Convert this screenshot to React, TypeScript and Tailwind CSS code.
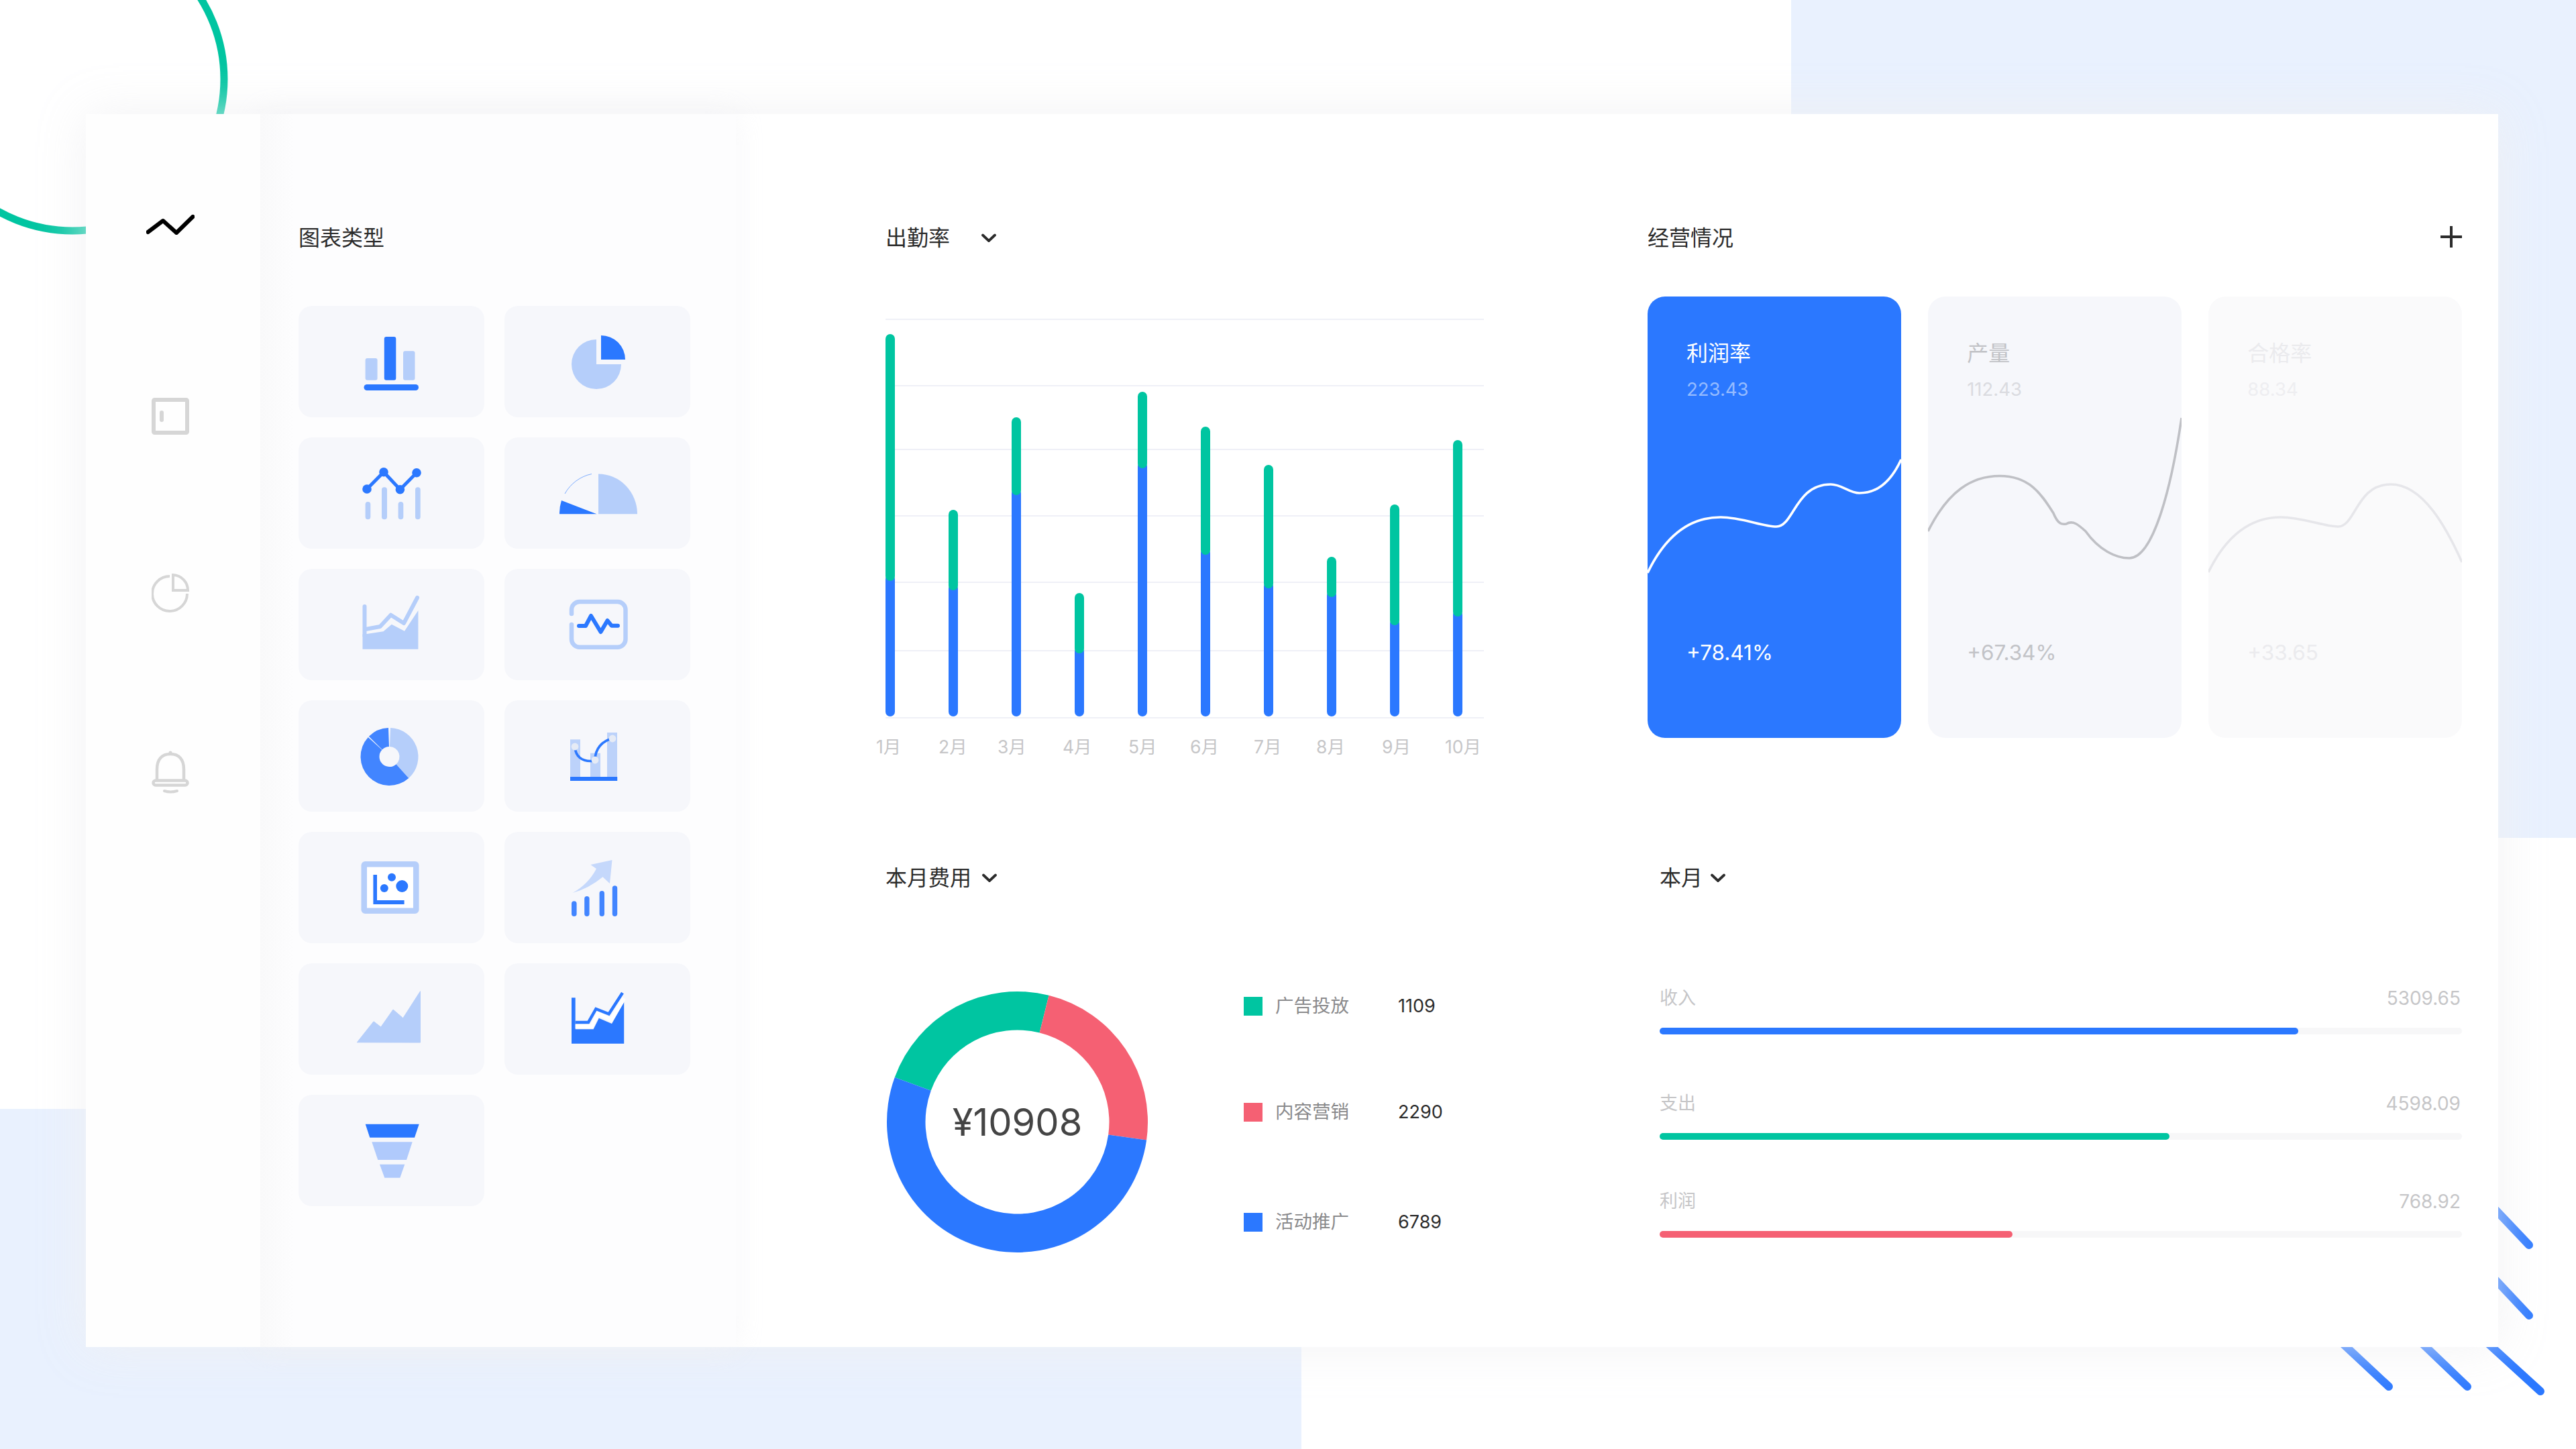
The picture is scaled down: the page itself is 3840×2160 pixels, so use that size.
import React from "react";

const BLUE = "#2b78ff";
const LIGHT = "#b5cefa";
const GREEN = "#00c5a1";
const RED = "#f56073";

function sector(cx: number, cy: number, r1: number, r2: number, a0: number, a1: number) {
  const p = (r: number, a: number) => {
    const t = ((a - 90) * Math.PI) / 180;
    return `${(cx + r * Math.cos(t)).toFixed(2)} ${(cy + r * Math.sin(t)).toFixed(2)}`;
  };
  const big = a1 - a0 > 180 ? 1 : 0;
  return `M${p(r2, a0)} A${r2} ${r2} 0 ${big} 1 ${p(r2, a1)} L${p(r1, a1)} A${r1} ${r1} 0 ${big} 0 ${p(r1, a0)} Z`;
}

function Chevron() {
  return (
    <svg width="22" height="14" viewBox="0 0 22 14" fill="none">
      <path d="M2 2.5 L11 11 L20 2.5" stroke="#2c2c2c" strokeWidth="3.8" strokeLinecap="round" strokeLinejoin="round" />
    </svg>
  );
}

const icons: React.ReactNode[] = [
  <>
    <rect x="99.6" y="78" width="18" height="32.7" rx="3" fill={LIGHT} />
    <rect x="127.8" y="46" width="17.5" height="64.7" rx="3" fill={BLUE} />
    <rect x="156" y="67.3" width="17.5" height="43.4" rx="3" fill={LIGHT} />
    <rect x="97.5" y="117" width="81.5" height="9" rx="4.5" fill={BLUE} />
  </>,
  <>
    <path d="M137 50 A37 37 0 1 0 174 87 L137 87 Z" fill={LIGHT} />
    <path d="M144 44 A36 36 0 0 1 180 80 L144 80 Z" fill={BLUE} />
  </>,
  <>
    <rect x="99.6" y="96" width="7.7" height="26.3" rx="3.8" fill={LIGHT} />
    <rect x="124" y="74.3" width="8" height="48" rx="3.8" fill={LIGHT} />
    <rect x="148.6" y="96" width="7.7" height="26.3" rx="3.8" fill={LIGHT} />
    <rect x="174" y="74.3" width="7.7" height="48" rx="3.8" fill={LIGHT} />
    <path d="M102 77 L127 51.7 L151.4 77.7 L176 52.7" fill="none" stroke={BLUE} strokeWidth="5" />
    <circle cx="102" cy="77" r="6.8" fill={BLUE} />
    <circle cx="127" cy="51.7" r="6.8" fill={BLUE} />
    <circle cx="151.4" cy="77.7" r="6.8" fill={BLUE} />
    <circle cx="176" cy="52.7" r="6.8" fill={BLUE} />
  </>,
  <>
    <path d="M140 54.5 A58 60 0 0 1 198 114.3 L140 114.3 Z" fill={LIGHT} />
    <path d="M137.5 114.3 L82 114.3 Q82 103 85 94 Z" fill={BLUE} />
    <path d="M90 84 A60 60 0 0 1 130 54.5" fill="none" stroke={BLUE} strokeWidth="0.6" />
  </>,
  <>
    <path d="M95.5 119.7 V97.5 L101.7 97 L126.5 93.3 L138.8 82.7 L158 92.7 L178.4 62 V119.7 Z" fill={LIGHT} />
    <path d="M98.5 56 V100" stroke={LIGHT} strokeWidth="6" strokeLinecap="round" />
    <path d="M100 90 L121.6 86 L137.6 68.7 L157 81 L177 43" fill="none" stroke={LIGHT} strokeWidth="6" strokeLinecap="round" strokeLinejoin="round" />
  </>,
  <>
    <path d="M100 67 V61 A12 12 0 0 1 112 49 H168.5 A12 12 0 0 1 180.5 61 V104.7 A12 12 0 0 1 168.5 116.7 H112 A12 12 0 0 1 100 104.7 V83" fill="none" stroke={LIGHT} strokeWidth="6.5" strokeLinecap="round" />
    <path d="M111 85 H121 L129 70 L143.5 94 L153.5 77 L159.6 84.7 H169" fill="none" stroke={BLUE} strokeWidth="6" strokeLinecap="round" strokeLinejoin="round" />
  </>,
  <>
    <path d={sector(135.5, 84, 15, 43, 2, 138)} fill={LIGHT} />
    <path d={sector(135.5, 84, 15, 43, 138, 312.5)} fill="#4285ff" />
    <path d={sector(135.5, 84, 15, 43, 314.5, 358)} fill="#4285ff" />
  </>,
  <>
    <rect x="98" y="58.3" width="15" height="56" fill="#bcd2fa" />
    <rect x="128" y="78.7" width="15" height="36" fill="#bcd2fa" />
    <rect x="153" y="48" width="15" height="66" fill="#bcd2fa" />
    <rect x="98" y="114" width="70.2" height="6" fill={BLUE} />
    <path d="M105 70 C106 82 114 93 135 90" fill="none" stroke={BLUE} strokeWidth="3.6" />
    <path d="M135 89 C135 72 146 60 161 57" fill="none" stroke={BLUE} strokeWidth="3.6" />
    <circle cx="105" cy="69" r="5.4" fill="#e6ebf5" />
    <circle cx="135" cy="89" r="5.4" fill="#e6ebf5" />
    <circle cx="161" cy="57" r="5.4" fill="#e6ebf5" />
  </>,
  <>
    <rect x="97.75" y="48.3" width="77.5" height="69.4" rx="1.5" fill="#fff" stroke={LIGHT} strokeWidth="8.6" />
    <path d="M111.4 64 H117 V102 H157.6 V108 H111.4 Z" fill={BLUE} />
    <circle cx="127.8" cy="84" r="6" fill={BLUE} />
    <circle cx="139" cy="67.7" r="6" fill={BLUE} />
    <circle cx="154.3" cy="81" r="9" fill={BLUE} />
  </>,
  <>
    <path d="M160.5 42 L128.4 49 L137 55 Q125 78 101.6 91 Q125 85 146.5 67.3 L157 77 Z" fill="#c5d8fb" />
    <rect x="100" y="103.3" width="7.6" height="22.7" rx="3.8" fill="#4285ff" />
    <rect x="119.2" y="96" width="7.4" height="30" rx="3.7" fill="#4285ff" />
    <rect x="141.6" y="88" width="7.4" height="38" rx="3.7" fill="#4285ff" />
    <rect x="160.8" y="80.3" width="7.4" height="45.7" rx="3.7" fill="#4285ff" />
  </>,
  <path d="M87.3 117.8 L112 86.7 L122.8 95 L141 69 L155.8 81.7 L181.5 41.7 V118 Z" fill={LIGHT} stroke={LIGHT} strokeWidth="1" strokeLinejoin="round" />,
  <>
    <path d="M100 119.7 V51.3 H105.7 V98.3 H132.6 L140.8 81.7 L160 90 L178.2 58 V119.7 Z" fill={BLUE} />
    <path d="M105.7 94 H130 L139.5 75 L159 84 L178.2 52" fill="none" stroke="#fff" strokeWidth="6" />
    <path d="M105.7 88 H125 L136.4 68 L155.6 75.5 L176 44" fill="none" stroke={BLUE} strokeWidth="4.5" />
  </>,
  <>
    <path d="M99.7 43.7 H179.7 L173 63.7 H106.3 Z" fill={BLUE} />
    <path d="M109.3 70.3 H169.7 L161 97 H118.3 Z" fill="#b0cafc" />
    <path d="M121 103.7 H158.3 L151.3 123.7 H128.3 Z" fill="#b0cafc" />
  </>,
];

const bars = [
  { x: 1327, top: 498, split: 866 },
  { x: 1421, top: 760, split: 880 },
  { x: 1515, top: 622, split: 738 },
  { x: 1609, top: 884, split: 974 },
  { x: 1703, top: 584, split: 698 },
  { x: 1797, top: 636, split: 827 },
  { x: 1891, top: 693, split: 877 },
  { x: 1985, top: 830, split: 890 },
  { x: 2079, top: 752, split: 932 },
  { x: 2173, top: 656, split: 919 },
];
const gridY = [475, 574, 669, 768, 867, 969, 1069];
const months = [
  { t: "1月", w: 93 },
  { t: "2月", w: 88 },
  { t: "3月", w: 97 },
  { t: "4月", w: 98 },
  { t: "5月", w: 92 },
  { t: "6月", w: 95 },
  { t: "7月", w: 93 },
  { t: "8月", w: 98 },
  { t: "9月", w: 94 },
  { t: "10月", w: 64 },
];

const cards = [
  {
    title: "利润率",
    sub: "223.43",
    pct: "+78.41%",
    bg: "bg-[#2b78ff]",
    c1: "text-white",
    c2: "text-white/50",
    c3: "text-white",
    stroke: "#ffffff",
    d: "M0 412 C25 360 60 329 109 329 C140 329 172 343 192 343 C218 343 220 280 273 280 C290 280 300 293 316 293 C340 293 362 278 378 243",
  },
  {
    title: "产量",
    sub: "112.43",
    pct: "+67.34%",
    bg: "bg-[#f6f7fb]",
    c1: "text-[#c2c3c7]",
    c2: "text-[#dadbe0]",
    c3: "text-[#c2c3c7]",
    stroke: "#bfc0c5",
    d: "M0 350 C30 290 65 267.5 107 267.5 C155 267.5 172 300 187 323 C194 340 200 340 206 339 C216 333 224 340 235 350 C255 378 280 390 300 390 C335 390 362 290 378 181",
  },
  {
    title: "合格率",
    sub: "88.34",
    pct: "+33.65",
    bg: "bg-[#fafafb]",
    c1: "text-[#ebebee]",
    c2: "text-[#eeeef1]",
    c3: "text-[#ebebee]",
    stroke: "#e6e6ea",
    d: "M0 411 C25 360 60 329 108 329 C140 329 172 343 193 343 C220 343 220 280 272 280 C320 280 355 345 378 396",
  },
];

const legend = [
  { c: "bg-[#00c5a1]", t: "广告投放", v: "1109", m: "mt-0" },
  { c: "bg-[#f56073]", t: "内容营销", v: "2290", m: "mt-[118px]" },
  { c: "bg-[#2b78ff]", t: "活动推广", v: "6789", m: "mt-[124px]" },
];

const progress = [
  { t: "收入", v: "5309.65", fill: "w-[952px] bg-[#2b78ff]", m: "mt-[141px]" },
  { t: "支出", v: "4598.09", fill: "w-[760px] bg-[#00c5a1]", m: "mt-[85px]" },
  { t: "利润", v: "768.92", fill: "w-[526px] bg-[#f56073]", m: "mt-[74px]" },
];

export default function App() {
  return (
    <div className="relative h-[2160px] w-[3840px] overflow-hidden bg-white font-['Inter','Noto_Sans_CJK_SC',sans-serif] text-[#2c2c2c]">
      {/* backdrop */}
      <div className="absolute right-0 top-0 h-[1249px] w-[1170px] bg-[#e9f1fe]" />
      <div className="absolute bottom-0 left-0 h-[507px] w-[1940px] bg-[#e9f1fe]" />
      <svg className="absolute inset-0" width="3840" height="2160" fill="none">
        <circle cx="108" cy="118" r="226" stroke={GREEN} strokeWidth="11" />
        {[
          "M3660 1740 L3770 1856",
          "M3660 1844 L3770 1961",
          "M3440 1954 L3561 2067",
          "M3560 1954 L3678 2067",
          "M3660 1958 L3787 2074",
        ].map((d) => (
          <path key={d} d={d} stroke={BLUE} strokeWidth="12" strokeLinecap="round" />
        ))}
      </svg>

      <div className="absolute left-[128px] top-[170px] flex h-[1838px] w-[3596px] bg-white shadow-[0_0_70px_rgba(240,240,242,0.85)]">
        {/* sidebar */}
        <aside className="relative z-10 flex w-[260px] shrink-0 flex-col items-center bg-[#fefefe] pr-2 pt-[150px]">
          <svg width="72" height="30" viewBox="0 0 72 30" fill="none">
            <path d="M2.5 26 L25 9 L45 27 L69.5 3" stroke="#000" strokeWidth="6" strokeLinecap="round" strokeLinejoin="round" />
          </svg>
          <svg className="mt-[243px]" width="56" height="55" viewBox="0 0 56 55" fill="none">
            <rect x="3" y="3" width="50" height="49" rx="1.5" stroke="#d6d6d6" strokeWidth="6" />
            <rect x="12" y="19" width="6" height="17" rx="3" fill="#d6d6d6" />
          </svg>
          <svg className="mt-[207px]" width="56" height="58" viewBox="0 0 56 58" fill="none">
            <path d="M27 4 A26 26 0 1 0 53 30" stroke="#d6d6d6" strokeWidth="4" />
            <path d="M32 2 V25 H54 A23 23 0 0 0 32 2 Z" stroke="#d6d6d6" strokeWidth="4" />
          </svg>
          <svg className="mt-[206px]" width="56" height="64" viewBox="0 0 56 64" fill="none">
            <path d="M8 45 V28 C8 12 16 5 28 5 C40 5 48 12 48 28 V45" stroke="#d6d6d6" strokeWidth="4.5" />
            <rect x="2.5" y="44.5" width="51" height="7" rx="3.5" stroke="#d6d6d6" strokeWidth="4.5" />
            <circle cx="28" cy="3" r="2.5" fill="#d6d6d6" />
            <path d="M19 60 Q28 63 38 60" stroke="#d6d6d6" strokeWidth="4" strokeLinecap="round" />
          </svg>
        </aside>

        {/* chart types */}
        <section className="flex w-[709px] shrink-0 flex-col bg-[linear-gradient(to_right,#f9f9fa,#fdfdfe_50px)] pl-[57px] pt-[165px] shadow-[0_0_40px_rgba(242,242,245,0.6)]">
          <h2 className="h-10 text-[32px] font-normal leading-10">图表类型</h2>
          <div className="mt-[81px] grid w-[585px] grid-cols-[277px_277px] gap-x-[30px] gap-y-[30px]">
            {icons.map((ic, i) => (
              <div key={i} className="h-[166px] w-[277px] rounded-[20px] bg-[#f6f7fb]">
                <svg width="277" height="166" viewBox="0 0 277 166">
                  {ic}
                </svg>
              </div>
            ))}
          </div>
        </section>

        {/* column 1 */}
        <section className="ml-[223px] flex w-[1136px] shrink-0 flex-col pt-[165px]">
          <div className="flex h-10 items-center">
            <h2 className="text-[32px] font-normal leading-10">出勤率</h2>
            <span className="ml-[47px]">
              <Chevron />
            </span>
          </div>
          <svg className="mt-[100px]" width="892" height="600" viewBox="0 0 892 600">
            {gridY.map((y) => (
              <rect key={y} x="0" y={y - 475} width="892" height="2" fill="#eff0f7" />
            ))}
            {bars.map((b) => (
              <g key={b.x}>
                <rect x={b.x - 1327} y={b.split - 10 - 475} width="14" height={1068 - b.split + 10} rx="7" fill={BLUE} />
                <rect x={b.x - 1327} y={b.top - 475} width="14" height={b.split - b.top} rx="7" fill={GREEN} />
              </g>
            ))}
          </svg>
          <div className="-ml-[14px] mt-[20px] flex h-9 text-[26.5px] leading-9 text-[#c6c6c8]">
            {months.map((m) => (
              <span key={m.t} className="shrink-0" style={{ width: m.w }}>
                {m.t}
              </span>
            ))}
          </div>
          <div className="mt-[158px] flex h-10 items-center">
            <h2 className="text-[32px] font-normal leading-10">本月费用</h2>
            <span className="ml-[16px]">
              <Chevron />
            </span>
          </div>
          <div className="ml-[2px] mt-[149px] flex">
            <div className="relative flex h-[389px] w-[389px] shrink-0 items-center justify-center">
              <svg className="absolute inset-0" width="389" height="389" viewBox="0 0 389 389">
                <path d={sector(194.5, 194.5, 137, 194.5, 290, 374)} fill={GREEN} />
                <path d={sector(194.5, 194.5, 137, 194.5, 14, 98)} fill={RED} />
                <path d={sector(194.5, 194.5, 137, 194.5, 98, 290)} fill={BLUE} />
              </svg>
              <span className="relative text-[56px] leading-none text-[#444]">¥10908</span>
            </div>
            <div className="ml-[143px] flex flex-col pt-[2px]">
              {legend.map((l) => (
                <div key={l.t} className={`flex h-10 items-center ${l.m}`}>
                  <i className={`h-7 w-7 ${l.c}`} />
                  <span className="ml-[19px] w-[183px] text-[27.5px] text-[#8a8a8c]">{l.t}</span>
                  <span className="text-[27px]">{l.v}</span>
                </div>
              ))}
            </div>
          </div>
        </section>

        {/* column 2 */}
        <section className="flex w-[1214px] shrink-0 flex-col pt-[165px]">
          <div className="flex h-10 items-center justify-between">
            <h2 className="text-[32px] font-normal leading-10">经营情况</h2>
            <svg className="-mt-1" width="32" height="32" viewBox="0 0 32 32" fill="none">
              <path d="M16 0 V32 M0 16 H32" stroke="#2c2c2c" strokeWidth="4" />
            </svg>
          </div>
          <div className="mt-[67px] flex gap-[40.5px]">
            {cards.map((c) => (
              <div key={c.title} className={`flex h-[658px] w-[378px] flex-col overflow-hidden rounded-[26px] pt-[65px] ${c.bg}`}>
                <div className={`h-10 pl-[58px] text-[32px] leading-10 ${c.c1}`}>{c.title}</div>
                <div className={`mt-[17px] h-8 pl-[58px] text-[27.5px] leading-8 ${c.c2}`}>{c.sub}</div>
                <svg className="shrink-0" width="378" height="357" viewBox="0 154 378 357" fill="none">
                  <path d={c.d} stroke={c.stroke} strokeWidth="3.6" />
                </svg>
                <div className={`h-10 pl-[58px] text-[31.5px] leading-10 ${c.c3}`}>{c.pct}</div>
              </div>
            ))}
          </div>
          <div className="ml-[18px] mt-[189px] flex h-10 items-center">
            <h2 className="text-[32px] font-normal leading-10">本月</h2>
            <span className="ml-[12px]">
              <Chevron />
            </span>
          </div>
          {progress.map((p) => (
            <div key={p.t} className={`ml-[18px] ${p.m}`}>
              <div className="flex h-9 items-center justify-between pr-[2px] leading-9 text-[#c6c6c8]">
                <span className="text-[27px]">{p.t}</span>
                <span className="text-[28px]">{p.v}</span>
              </div>
              <div className="mt-[26px] h-[10px] w-[1196px] rounded-full bg-[#f7f7f8]">
                <div className={`h-full rounded-full ${p.fill}`} />
              </div>
            </div>
          ))}
        </section>
      </div>
    </div>
  );
}
